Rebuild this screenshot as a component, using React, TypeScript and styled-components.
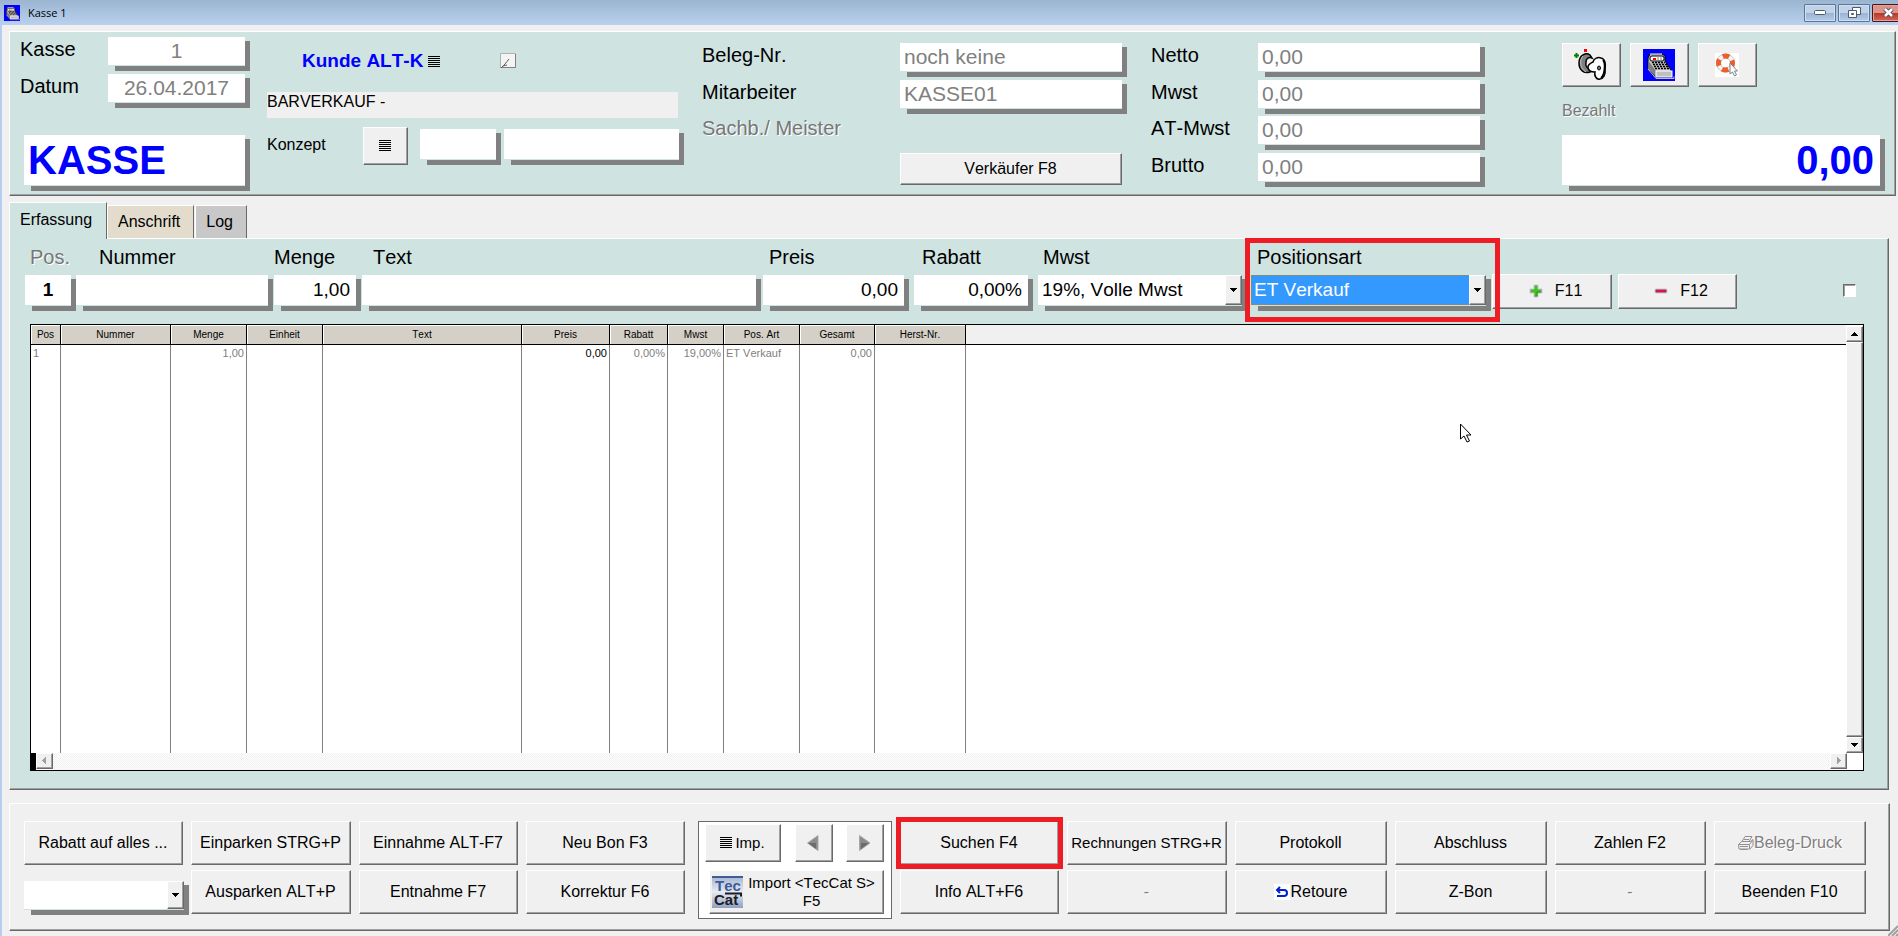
import React from "react";
import styled, { createGlobalStyle, css } from "styled-components";

const TEAL = "#cfe3e1";
const FACE = "#f0f0f0";
const SHADE = "#a0a0a0";
const DARK = "#696969";
const RED = "#ee1c25";

const GlobalStyle = createGlobalStyle`
  *, *::before, *::after { box-sizing: border-box; }
  body {
    margin: 0;
    background: ${FACE};
    color: #000;
    font: 16px/20px "Liberation Sans", Arial, sans-serif;
    font-kerning: none;
  }
  button, input, select { font: inherit; font-kerning: none; color: inherit; margin: 0; border-radius: 0; }
`;

const bevel = css`
  border: 1px solid;
  border-color: #fff ${DARK} ${DARK} #fff;
  box-shadow: inset -1px -1px ${SHADE};
`;

/* ---------- window frame ---------- */

const Window = styled.div`
  display: flex;
  flex-direction: column;
  height: 100vh;
  min-height: 640px;
  min-width: 1500px;
  background: ${FACE};
  overflow: hidden;
  position: relative;
`;

const TitleBar = styled.header`
  display: flex;
  align-items: center;
  flex: none;
  height: 25px;
  padding-left: 4px;
  background: linear-gradient(#9bb5d1, #b9d1ee);
`;

const Title = styled.h1`
  flex: 1;
  margin: 0 0 0 8px;
  font: 11px/16px "Open Sans", "Noto Sans", sans-serif;
`;

const Caption = styled.div`
  display: flex;
  gap: 2px;
  margin-right: -6px;
`;

const CaptionButton = styled.button<{ $close?: boolean }>`
  display: grid;
  place-items: center;
  width: 32px;
  height: 18px;
  padding: 0;
  border: 1px solid ${(p) => (p.$close ? "#4a1420" : "#5c7596")};
  border-radius: 1px;
  box-shadow: inset 0 0 0 1px ${(p) => (p.$close ? "#e0a49c" : "#cfe0f2")};
  background: ${(p) =>
    p.$close
      ? "linear-gradient(#dc9488 0 48%, #b8382a 52%, #cf6a54)"
      : "linear-gradient(#bfd2e8 0 48%, #9ab4d2 52%, #b4cce6)"};
`;

const Client = styled.main`
  display: flex;
  flex-direction: column;
  flex: 1;
  min-height: 0;
  padding: 6px 2px 5px 7px;
  border-left: 2px solid #b5cdf0;
`;

/* ---------- shared parts ---------- */

const Shadowed = styled.div<{ $w?: string; $h: number; $gap?: number }>`
  display: grid;
  width: ${(p) => p.$w ?? "auto"};
  height: ${(p) => p.$h}px;
  margin-right: ${(p) => p.$gap ?? 0}px;
  padding: 0 5px 5px 0;
  background: linear-gradient(#808080, #808080) no-repeat 7px 4px;
`;

const TextBox = styled.input<{ $tone?: "value" | "live" | "hero"; $align?: string; $bold?: boolean; $on?: string }>`
  width: 100%;
  min-width: 0;
  height: 100%;
  padding: 0 4px;
  border: 0;
  border-bottom: 1px solid ${TEAL};
  background: #fff;
  outline: 0;
  text-align: ${(p) => p.$align ?? "left"};
  font-weight: ${(p) => (p.$bold ? "bold" : "normal")};
  ${(p) =>
    p.$tone === "hero"
      ? "color: #00f; font-size: 40px; padding: 0 6px 0 4px;"
      : p.$tone === "live"
      ? "color: #000; font-size: 19px; padding: 0 6px;"
      : "color: #808080; font-size: 21px;"}
`;

const Label = styled.label<{ $indent?: number; $disabled?: boolean }>`
  font-size: 20px;
  line-height: 24px;
  white-space: nowrap;
  padding-left: ${(p) => p.$indent ?? 0}px;
  ${(p) => p.$disabled && "color: #777; text-shadow: 1px 1px #fff;"}
`;

const Button = styled.button<{ $h?: number; $w?: number; $disabled?: boolean; $small?: boolean }>`
  ${bevel}
  display: flex;
  align-items: center;
  justify-content: center;
  width: ${(p) => (p.$w ? `${p.$w}px` : "100%")};
  height: ${(p) => p.$h ?? 44}px;
  padding: 0 1px 1px 0;
  background: ${FACE};
  white-space: nowrap;
  font-size: ${(p) => (p.$small ? 15 : 16)}px;
  line-height: 18px;
  ${(p) => p.$disabled && "color: #808080; text-shadow: 1px 1px #fff;"}
`;

/* ---------- head panel ---------- */

const HeadPanel = styled.section`
  ${bevel}
  display: grid;
  grid-template-columns: 247fr 435fr 449fr 411fr 323fr;
  flex: none;
  height: 165px;
  padding: 0 10px;
  background: ${TEAL};
`;

const Pairs = styled.div<{ $cols: string; $rows: string; $top: number }>`
  display: grid;
  grid-template-columns: ${(p) => p.$cols};
  grid-template-rows: ${(p) => p.$rows};
  align-content: start;
  align-items: start;
  padding-top: ${(p) => p.$top}px;
`;

const HeroSlot = styled.div`
  grid-column: 1 / -1;
  padding-left: 4px;
`;

const Customer = styled.div`
  display: flex;
  flex-direction: column;
  padding-top: 15px;
`;

const CustomerTop = styled.div`
  display: flex;
  align-items: center;
  height: 28px;
  padding-left: 35px;
`;

const LinkButton = styled.button`
  display: flex;
  align-items: center;
  gap: 5px;
  padding: 0;
  margin-right: 60px;
  border: 0;
  background: none;
  color: #00f;
  font-weight: bold;
  font-size: 19px;
  line-height: 24px;
  white-space: nowrap;
`;

const NoteButton = styled.button`
  display: grid;
  padding: 0;
  border: 0;
  background: none;
`;

const CustomerName = styled.output`
  width: 411px;
  height: 26px;
  margin-top: 17px;
  line-height: 20px;
  background: ${FACE};
`;

const ConceptRow = styled.div`
  display: grid;
  grid-template-columns: 96px 57px 84px 180px;
  align-items: end;
  margin-top: 9px;
`;

const ConceptLabel = styled.label`
  align-self: start;
  padding-top: 8px;
`;

const Paid = styled.div`
  display: flex;
  flex-direction: column;
  padding-top: 11px;
`;

const ToolRow = styled.div`
  display: flex;
  gap: 9px;
`;

const PaidLabel = styled.label`
  margin: 14px 0;
  color: #777;
  text-shadow: 1px 1px #fff;
`;

/* ---------- tabs and entry panel ---------- */

const Tabs = styled.nav`
  display: flex;
  align-items: flex-end;
  flex: none;
  height: 42px;
`;

const Tab = styled.button<{ $bg: string; $active?: boolean }>`
  height: ${(p) => (p.$active ? 37 : 33)}px;
  padding: 0 ${(p) => (p.$active ? 14 : 13)}px 0 10px;
  margin-right: 1px;
  border: solid;
  border-width: 1px 1px 0;
  border-color: #fff ${DARK} #fff #fff;
  background: ${(p) => p.$bg};
  ${(p) => p.$active && "margin: 0 0 -1px; padding-bottom: 3px; position: relative; z-index: 1;"}
`;

const EntryPanel = styled.section`
  ${bevel}
  display: flex;
  flex-direction: column;
  flex: 1;
  min-height: 0;
  margin-right: 7px;
  padding: 6px 24px 18px 15px;
  background: ${TEAL};
`;

const EntryRow = styled.div`
  display: grid;
  grid-template-columns: 51fr 198fr 88fr 401fr 151fr 124fr 213fr 241fr 126fr 119fr 127fr;
  align-items: end;
  margin-bottom: 13px;
`;

const Entry = styled.div`
  display: flex;
  flex-direction: column;
  gap: 6px;
  min-width: 0;
  position: relative;
`;

const Highlight = styled.span<{ $inset: string }>`
  position: absolute;
  inset: ${(p) => p.$inset};
  border: 5px solid ${RED};
  pointer-events: none;
  z-index: 2;
`;

const SelectCell = styled.div`
  display: grid;
  grid-template-columns: minmax(0, 1fr);
  min-height: 0;
  border-bottom: 1px solid ${TEAL};
`;

const Drop = styled.select<{ $selected?: boolean }>`
  grid-area: 1 / 1;
  width: 100%;
  height: 100%;
  padding: 0 18px 0 4px;
  border: 0;
  appearance: none;
  outline: 0;
  background: #fff;
  font-size: 19px;
  ${(p) =>
    p.$selected &&
    css`
      color: #fff;
      padding-left: 2px;
      border: 1px dotted #d08000;
      background: #3399ff;
    `}
`;

const Arrow = styled.span`
  ${bevel}
  grid-area: 1 / 1;
  justify-self: end;
  display: grid;
  place-items: center;
  width: 17px;
  background: ${FACE};
  pointer-events: none;
`;

const EntryButton = styled(Button)`
  margin-bottom: 2px;
  gap: 12px;
  padding: 0 0 1px 7px;
`;

const Check = styled.input`
  appearance: none;
  justify-self: end;
  width: 13px;
  height: 13px;
  margin: 0 8px 14px 0;
  border: 1px solid;
  border-color: ${DARK} #fff #fff ${DARK};
  background: #fff;
  box-shadow: inset 1px 1px ${SHADE};
`;

/* ---------- position grid ---------- */

const GridFrame = styled.div`
  display: flex;
  flex-direction: column;
  flex: 1;
  min-height: 0;
  margin-left: 5px;
  border: 1px solid #000;
  background: #fff;
  position: relative;
`;

const GridTop = styled.div`
  display: flex;
  flex: 1;
  min-height: 0;
`;

const GridMain = styled.div`
  flex: 1;
  min-width: 0;
  height: 100%;
`;

const Table = styled.table`
  width: 100%;
  height: 100%;
  table-layout: fixed;
  border-collapse: separate;
  border-spacing: 0;
  line-height: 14px;
`;

const Th = styled.th<{ $w?: number }>`
  width: ${(p) => (p.$w ? `${p.$w}px` : "auto")};
  height: 20px;
  padding: 0;
  border-bottom: 1px solid #000;
  background: ${FACE};
  font-size: 10px;
  font-weight: normal;
  ${(p) =>
    p.$w &&
    css`
      border-right: 1px solid #000;
      background: #d4d0c8;
      box-shadow: inset 1px 1px #fff;
    `}
`;

const Td = styled.td<{ $align?: string; $strong?: boolean; $last?: boolean }>`
  height: 16px;
  padding: 0 2px;
  border-right: ${(p) => (p.$last ? "0" : "1px solid #808080")};
  color: ${(p) => (p.$strong ? "#000" : "#808080")};
  font-size: 11px;
  text-align: ${(p) => p.$align ?? "left"};
  white-space: nowrap;
  vertical-align: middle;
`;

const FillRow = styled.tr`
  height: 100%;
`;

const VScroll = styled.div`
  display: flex;
  flex-direction: column;
  width: 17px;
  padding-top: 1px;
`;

const Thumb = styled.div`
  ${bevel}
  flex: 1;
  background: ${FACE};
`;

const ScrollButton = styled.button`
  ${bevel}
  display: grid;
  place-items: center;
  width: 17px;
  height: 16px;
  padding: 0;
  background: ${FACE};
`;

const HScroll = styled.div`
  display: flex;
  flex: none;
  height: 17px;
  padding-right: 16px;
  border-left: 5px solid #000;
`;

const Track = styled.div`
  flex: 1;
  background: repeating-conic-gradient(#fff 0 25%, ${FACE} 0 50%) 0 0 / 2px 2px;
`;

const Pointer = styled.svg`
  position: absolute;
  top: 98px;
  left: 78%;
`;

/* ---------- action panel ---------- */

const ActionPanel = styled.section`
  ${bevel}
  display: grid;
  grid-template-columns: 159fr 160fr 159fr 164fr 194fr 159fr 160fr 152fr 152fr 151fr 152fr;
  grid-template-rows: 44px 49px;
  gap: 5px 8px;
  flex: none;
  margin: 13px 6px 0 0;
  padding: 17px 23px 11px 14px;
`;

const Slot = styled.div<{ $col: number; $row: number; $end?: number }>`
  grid-column: ${(p) => p.$col};
  grid-row: ${(p) => p.$row};
  min-width: 0;
  padding-right: ${(p) => p.$end ?? 0}px;
  position: relative;
`;

const ParkSlot = styled(Slot)`
  padding-top: 11px;
  margin-right: -6px;
`;

const ImportBox = styled.div`
  grid-column: 5;
  grid-row: 1 / span 2;
  display: flex;
  flex-direction: column;
  gap: 8px;
  padding: 2px 7px 4px 6px;
  border: 1px solid ${DARK};
  background: #fff;
`;

const ImportRow = styled.div`
  display: flex;
  justify-content: space-between;
`;

const ImportButton = styled(Button)`
  width: auto;
  margin-left: 4px;
  gap: 5px;
  padding-right: 6px;
`;

const Spaced = styled.span<{ $gap: number }>`
  display: flex;
  align-items: center;
  gap: ${(p) => p.$gap}px;
`;

const Grip = styled.svg`
  position: absolute;
  right: 0;
  bottom: 0;
`;

/* ---------- drawings ---------- */

const Lines = ({ w = 12 }: { w?: number }) => (
  <svg width={w} height="11" shapeRendering="crispEdges">
    {[0, 2, 4, 6, 8, 10].map((y) => (
      <rect key={y} x="0" y={y} width={w} height="1" />
    ))}
  </svg>
);

const Triangle = ({ dir, fill = "#000" }: { dir: "up" | "down" | "left" | "right"; fill?: string }) => {
  const d = {
    up: "M0 6h7v-1h-1v-1h-1v-1h-1v-1h-1v1h-1v1h-1v1h-1z",
    down: "M0 2h7v1h-1v1h-1v1h-1v1h-1v-1h-1v-1h-1v-1h-1z",
    left: "M5 0v7h-1v-1h-1v-1h-1v-1h-1v-1h1v-1h1v-1h1v-1z",
    right: "M2 0v7h1v-1h1v-1h1v-1h1v-1h-1v-1h-1v-1h-1v-1z",
  }[dir];
  return (
    <svg width="7" height="8" shapeRendering="crispEdges">
      <path d={d} fill={fill} />
    </svg>
  );
};

const Register = ({ size }: { size: number }) => (
  <svg width={size} height={size} viewBox="0 0 32 32">
    <rect width="32" height="32" fill="#00f" />
    <path d="M5 9 7 5h12l3 2v5l6 9v7H13L5 20z" fill="#c0c0c0" stroke="#000" />
    <path d="M5.500 12 13 22v6L5.500 20z" fill="#808080" />
    <path d="M7 5h12" stroke="#fff" />
    <rect x="7" y="7" width="14" height="5" rx="2" fill="#fff" stroke="#000" />
    <rect x="10" y="9" width="3" height="2" fill="#f00" />
    <path d="M15 8v3M18 8v3" stroke="#808080" />
    <path d="M9 13.500h13M10 15.500h14M11 17.500h14M12 19.500h15" stroke="#000" strokeWidth="1.400" strokeDasharray="2 1" />
    <rect x="13" y="22" width="16" height="6" fill="#c0c0c0" stroke="#fff" />
    <path d="M5 20 13 29.500h18v-2" fill="none" stroke="#c0c0c0" />
  </svg>
);

const KeySwitch = () => (
  <svg width="34" height="32" viewBox="0 0 34 32">
    <rect x="10" y="0" width="3" height="3" fill="#f00" />
    <path d="M0 6.500h5M2.500 4v5" stroke="#008000" strokeWidth="2" />
    <path d="M16 6C12 3 5 6 5 14c0 7 5 11 11 9l3-3c-6 1-8-3-7-7 0-4 3-5 6-4z" fill="#808080" stroke="#000" strokeWidth="1.500" />
    <path d="M9 7c-4 4-3 13 3 16" fill="none" stroke="#c0c0c0" />
    <path d="M19 13c1-4 5-5 8-4 4 1 5 6 4 11 1 6-2 10-5 10-4 1-6-4-5-7-3 0-7-1-7-5 0-3 3-4 5-5z" fill="#fff" stroke="#000" strokeWidth="1.500" />
    <path d="M29 11c3 3 2 15-2 18" fill="none" stroke="#000" strokeWidth="2" />
    <ellipse cx="25" cy="19" rx="1.500" ry="2" fill="#808080" stroke="#000" />
  </svg>
);

const Lifebuoy = () => (
  <svg width="24" height="24" viewBox="0 0 24 24">
    <rect width="24" height="24" fill="#fff" />
    <circle cx="10.500" cy="10" r="7" fill="none" stroke="#c2c8cc" strokeWidth="5" />
    <circle cx="10.500" cy="10" r="7" fill="none" stroke="#f4f5f6" strokeWidth="3.500" />
    <circle cx="10.500" cy="10" r="7" fill="none" stroke="#ec5f2a" strokeWidth="5" strokeDasharray="6.500 4.500" strokeDashoffset="3" />
    <path d="M15 10v11l2.500-2 2 4 2-1-2-4h3z" fill="#fff" stroke="#808080" />
  </svg>
);

const Note = () => (
  <svg width="16" height="16">
    <path d="M.5.500h15v14H.500z" fill="#f4f4f4" stroke="#b0b0b0" />
    <path d="M.5 14.500h15V1" fill="none" stroke="#808080" />
    <path d="M1 15 5 11 9 6M3 13l4-1" fill="none" stroke="#606060" />
  </svg>
);

const Plus = () => (
  <svg width="14" height="14">
    <path d="M5 1h4v4h4v4H9v4H5V9H1V5h4z" fill="#3fc41a" stroke="#d9b8ee" strokeWidth="1" />
    <path d="M6 12h2V8h4" fill="none" stroke="#2a9a10" />
  </svg>
);

const Minus = () => (
  <svg width="14" height="14">
    <rect x="1" y="5" width="12" height="4" rx="1" fill="#e0104a" stroke="#a8dcd8" strokeWidth="1" />
  </svg>
);

const Step = ({ back }: { back?: boolean }) => (
  <svg width="12" height="16">
    <path d={back ? "M11 .5v15L.500 8z" : "M.500.500v15L11 8z"} fill="#8c8c8c" stroke="#a8a8a8" />
    <path d={back ? "M9 8v6L1 8z" : "M2 8v6l8-6z"} fill="#6c6c6c" />
  </svg>
);

const TecCat = () => (
  <svg width="31" height="32" viewBox="0 0 31 32">
    <defs>
      <linearGradient id="tec" x1="0" y1="0" x2="0" y2="1">
        <stop offset="0" stopColor="#a3b4cf" />
        <stop offset=".5" stopColor="#e6ebf3" />
        <stop offset="1" stopColor="#8fa0c0" />
      </linearGradient>
    </defs>
    <rect width="31" height="32" fill="url(#tec)" />
    <rect width="31" height="2" fill="#3f5c96" />
    <text x="3" y="15" fontSize="15" fontWeight="bold" fill="#3f5c96">Tec</text>
    <text x="2" y="29" fontSize="15" fontWeight="bold" fill="#1c1c24">Cat</text>
    <path d="M13 17.500h16v3" fill="none" stroke="#1c1c24" strokeWidth="2" />
  </svg>
);

const Return = () => (
  <svg width="16" height="16">
    <rect width="16" height="16" fill="#fff" />
    <path d="M3 6h7a3 3 0 0 1 0 6H3M6 3 3 6l3 3" fill="none" stroke="#0020d8" strokeWidth="2" />
  </svg>
);

const Printer = () => (
  <svg width="17" height="16">
    <g fill="none" stroke="#909090">
      <path d="M5 6.500 8 1.500h7l-3 5M7 4.500h5M1.500 9.500l3-3h9l2.500-2v6l-3 3.500h-11zM1.500 9.500h11l3-4M12.500 9.500v4M3 11.500h8" />
      <path d="M3.500 14.500h7" />
    </g>
  </svg>
);

/* ---------- screen ---------- */

type Column = { name: string; w: number; value: string; align?: string; strong?: boolean };

const columns: Column[] = [
  { name: "Pos", w: 30, value: "1" },
  { name: "Nummer", w: 110, value: "" },
  { name: "Menge", w: 76, value: "1,00", align: "right" },
  { name: "Einheit", w: 76, value: "" },
  { name: "Text", w: 199, value: "" },
  { name: "Preis", w: 88, value: "0,00", align: "right", strong: true },
  { name: "Rabatt", w: 58, value: "0,00%", align: "right" },
  { name: "Mwst", w: 56, value: "19,00%", align: "right" },
  { name: "Pos. Art", w: 76, value: "ET Verkauf" },
  { name: "Gesamt", w: 75, value: "0,00", align: "right" },
  { name: "Herst-Nr.", w: 91, value: "" },
];

type FieldProps = {
  id: string;
  label: string;
  value: string;
  align?: string;
  bold?: boolean;
  indent?: number;
  gap?: number;
  disabled?: boolean;
};

const EntryField = ({ id, label, value, align, bold, indent, gap, disabled }: FieldProps) => (
  <Entry>
    <Label htmlFor={id} $indent={indent} $disabled={disabled}>{label}</Label>
    <Shadowed $h={36} $gap={gap}>
      <TextBox id={id} defaultValue={value} $tone="live" $align={align} $bold={bold} />
    </Shadowed>
  </Entry>
);

const HeadField = ({ id, label, value, align, indent }: FieldProps) => (
  <>
    <Label htmlFor={id} $indent={indent}>{label}</Label>
    <Shadowed $h={34}>
      <TextBox id={id} value={value} readOnly $align={align} />
    </Shadowed>
  </>
);

type Action = { text: string; col: number; row: number; end?: number; disabled?: boolean; small?: boolean; icon?: React.ReactNode; gap?: number; marked?: boolean };

const actions: Action[] = [
  { text: "Rabatt auf alles ...", col: 1, row: 1 },
  { text: "Einparken STRG+P", col: 2, row: 1 },
  { text: "Einnahme ALT-F7", col: 3, row: 1 },
  { text: "Neu Bon F3", col: 4, row: 1, end: 5 },
  { text: "Suchen F4", col: 6, row: 1, marked: true },
  { text: "Rechnungen STRG+R", col: 7, row: 1, small: true },
  { text: "Protokoll", col: 8, row: 1 },
  { text: "Abschluss", col: 9, row: 1 },
  { text: "Zahlen F2", col: 10, row: 1 },
  { text: "Beleg-Druck", col: 11, row: 1, disabled: true, icon: <Printer /> },
  { text: "Ausparken ALT+P", col: 2, row: 2 },
  { text: "Entnahme F7", col: 3, row: 2 },
  { text: "Korrektur F6", col: 4, row: 2, end: 5 },
  { text: "Info ALT+F6", col: 6, row: 2 },
  { text: "-", col: 7, row: 2, disabled: true },
  { text: "Retoure", col: 8, row: 2, icon: <Return />, gap: 1 },
  { text: "Z-Bon", col: 9, row: 2 },
  { text: "-", col: 10, row: 2, disabled: true },
  { text: "Beenden F10", col: 11, row: 2 },
];

export default function App() {
  return (
    <Window>
      <GlobalStyle />
      <TitleBar>
        <Register size={16} />
        <Title>Kasse 1</Title>
        <Caption>
          <CaptionButton aria-label="Minimieren">
            <svg width="12" height="6"><rect x=".5" y=".5" width="11" height="4" rx="1" fill="#fff" stroke="#4c5a70" /></svg>
          </CaptionButton>
          <CaptionButton aria-label="Wiederherstellen">
            <svg width="13" height="12">
              <path d="M4.500.500h8v7h-8z" fill="#fff" stroke="#4c5a70" />
              <path d="M.500 3.500h8v7h-8z" fill="#fff" stroke="#4c5a70" />
              <path d="M3.500 6.500h2v1h-2z" fill="none" stroke="#4c5a70" />
            </svg>
          </CaptionButton>
          <CaptionButton $close aria-label="Schließen">
            <svg width="13" height="11">
              <path d="M3 2l7 7M10 2 3 9" stroke="#4c4c60" strokeWidth="4.500" />
              <path d="M3 2l7 7M10 2 3 9" stroke="#fff" strokeWidth="2.500" />
            </svg>
          </CaptionButton>
        </Caption>
      </TitleBar>

      <Client>
        <HeadPanel>
          <Pairs $cols="88px 142px" $rows="37px 61px auto" $top={5}>
            <HeadField id="kasse" label="Kasse" value="1" align="center" />
            <HeadField id="datum" label="Datum" value="26.04.2017" align="center" />
            <HeroSlot>
              <Shadowed $h={56}>
                <TextBox $tone="hero" $bold value="KASSE" readOnly aria-label="Belegart" />
              </Shadowed>
            </HeroSlot>
          </Pairs>

          <Customer>
            <CustomerTop>
              <LinkButton>Kunde ALT-K <Lines /></LinkButton>
              <NoteButton aria-label="Notiz"><Note /></NoteButton>
            </CustomerTop>
            <CustomerName>BARVERKAUF -</CustomerName>
            <ConceptRow>
              <ConceptLabel htmlFor="konzept">Konzept</ConceptLabel>
              <Button $w={45} $h={38} aria-label="Konzept wählen"><Lines /></Button>
              <Shadowed $w="81px" $h={36}><TextBox id="konzept" defaultValue="" /></Shadowed>
              <Shadowed $h={36}><TextBox defaultValue="" aria-label="Konzept Bezeichnung" /></Shadowed>
            </ConceptRow>
          </Customer>

          <Pairs $cols="198px 227px" $rows="37px 36px 37px auto" $top={11}>
            <HeadField id="beleg" label="Beleg-Nr." value="noch keine" />
            <HeadField id="mitarbeiter" label="Mitarbeiter" value="KASSE01" />
            <Label as="span" $disabled>Sachb./ Meister</Label>
            <span />
            <span />
            <Button $w={222} $h={32}>Verkäufer F8</Button>
          </Pairs>

          <Pairs $cols="107px 227px" $rows="37px 36px 37px auto" $top={11}>
            <HeadField id="netto" label="Netto" value="0,00" />
            <HeadField id="mwst" label="Mwst" value="0,00" />
            <HeadField id="atmwst" label="AT-Mwst" value="0,00" />
            <HeadField id="brutto" label="Brutto" value="0,00" />
          </Pairs>

          <Paid>
            <ToolRow>
              <Button $w={59} aria-label="Kassenschloss"><KeySwitch /></Button>
              <Button $w={59} aria-label="Kasse öffnen"><Register size={32} /></Button>
              <Button $w={59} aria-label="Hilfe"><Lifebuoy /></Button>
            </ToolRow>
            <PaidLabel htmlFor="bezahlt">Bezahlt</PaidLabel>
            <Shadowed $h={56}>
              <TextBox id="bezahlt" $tone="hero" $bold $align="right" value="0,00" readOnly />
            </Shadowed>
          </Paid>
        </HeadPanel>

        <Tabs>
          <Tab $bg={TEAL} $active>Erfassung</Tab>
          <Tab $bg="#e3dccd">Anschrift</Tab>
          <Tab $bg="#c8c8c8">Log</Tab>
        </Tabs>

        <EntryPanel>
          <EntryRow>
            <EntryField id="e-pos" label="Pos." value="1" align="center" bold indent={5} disabled />
            <EntryField id="e-nummer" label="Nummer" value="" indent={23} gap={1} />
            <EntryField id="e-menge" label="Menge" value="1,00" align="right" gap={1} />
            <EntryField id="e-text" label="Text" value="" indent={11} gap={2} />
            <EntryField id="e-preis" label="Preis" value="0,00" align="right" indent={6} gap={5} />
            <EntryField id="e-rabatt" label="Rabatt" value="0,00%" align="right" indent={8} gap={5} />
            <Entry>
              <Label htmlFor="e-mwst" $indent={5}>Mwst</Label>
              <Shadowed $h={36} $gap={4}>
                <SelectCell>
                  <Drop id="e-mwst"><option>19%, Volle Mwst</option></Drop>
                  <Arrow><Triangle dir="down" /></Arrow>
                </SelectCell>
              </Shadowed>
            </Entry>
            <Entry>
              <Label htmlFor="e-art" $indent={6}>Positionsart</Label>
              <Shadowed $h={36} $gap={1}>
                <SelectCell>
                  <Drop id="e-art" $selected><option>ET Verkauf</option></Drop>
                  <Arrow><Triangle dir="down" /></Arrow>
                </SelectCell>
              </Shadowed>
              <Highlight $inset="-7px -8px -11px -6px" />
            </Entry>
            <div><EntryButton $h={35} $w={120}><Plus />F11</EntryButton></div>
            <div><EntryButton $h={35} $w={119}><Minus />F12</EntryButton></div>
            <Check type="checkbox" aria-label="Option" />
          </EntryRow>

          <GridFrame>
            <GridTop>
              <GridMain>
                <Table>
                  <thead>
                    <tr>
                      {columns.map((c) => <Th key={c.name} $w={c.w}>{c.name}</Th>)}
                      <Th aria-hidden="true" />
                    </tr>
                  </thead>
                  <tbody>
                    <tr>
                      {columns.map((c) => <Td key={c.name} $align={c.align} $strong={c.strong}>{c.value}</Td>)}
                      <Td $last />
                    </tr>
                    <FillRow>
                      {columns.map((c) => <Td key={c.name} />)}
                      <Td $last />
                    </FillRow>
                  </tbody>
                </Table>
              </GridMain>
              <VScroll>
                <ScrollButton aria-label="Nach oben"><Triangle dir="up" /></ScrollButton>
                <Thumb />
                <ScrollButton aria-label="Nach unten"><Triangle dir="down" /></ScrollButton>
              </VScroll>
            </GridTop>
            <HScroll>
              <ScrollButton aria-label="Nach links"><Triangle dir="left" fill="#a0a0a0" /></ScrollButton>
              <Track />
              <ScrollButton aria-label="Nach rechts"><Triangle dir="right" fill="#a0a0a0" /></ScrollButton>
            </HScroll>
            <Pointer width="13" height="20">
              <path d="M.500 1v15l3.500-3 3 6 2.500-1-3-6H11z" fill="#fff" stroke="#000" />
            </Pointer>
          </GridFrame>
        </EntryPanel>

        <ActionPanel>
          {actions.map((a) => (
            <Slot key={`${a.col}-${a.row}`} $col={a.col} $row={a.row} $end={a.end}>
              <Button $disabled={a.disabled} $small={a.small} disabled={a.disabled}>
                <Spaced $gap={a.gap ?? 0}>{a.icon}{a.text}</Spaced>
              </Button>
              {a.marked && <Highlight $inset="-4px" />}
            </Slot>
          ))}
          <ParkSlot $col={1} $row={2}>
            <Shadowed $h={34}>
              <SelectCell>
                <Drop aria-label="Geparkte Belege"><option></option></Drop>
                <Arrow><Triangle dir="down" /></Arrow>
              </SelectCell>
            </Shadowed>
          </ParkSlot>
          <ImportBox>
            <ImportRow>
              <Button $w={76} $h={38} $small><Spaced $gap={3}><Lines />Imp.</Spaced></Button>
              <Button $w={38} $h={38} aria-label="Zurück"><Step back /></Button>
              <Button $w={38} $h={38} aria-label="Weiter"><Step /></Button>
            </ImportRow>
            <ImportButton $small>
              <TecCat />
              <span>Import &lt;TecCat S&gt;<br />F5</span>
            </ImportButton>
          </ImportBox>
        </ActionPanel>
      </Client>
      <Grip width="10" height="11">
        <path d="M0 11 10 1M4 11l6-6M8 11l2-2" stroke="#a0a0a0" strokeWidth="2" />
      </Grip>
    </Window>
  );
}
